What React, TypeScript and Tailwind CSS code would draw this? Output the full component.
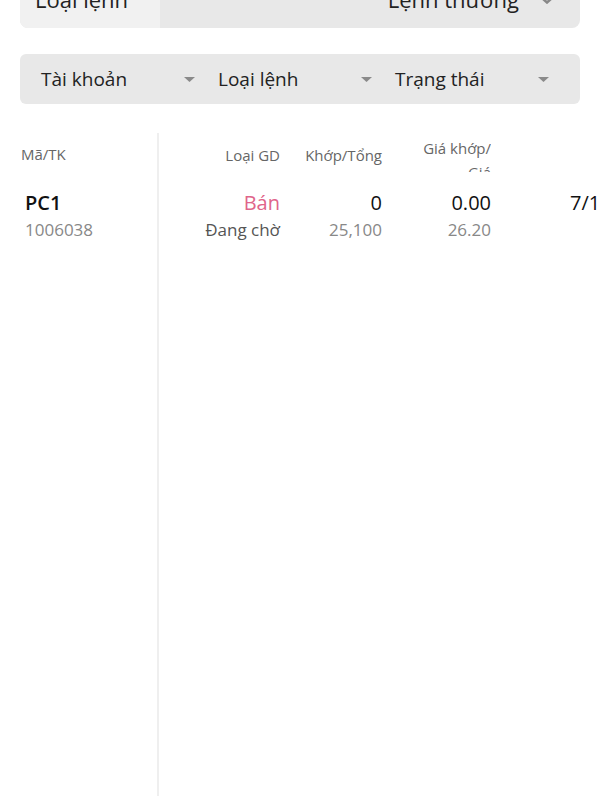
const font = { fontFamily: "'Open Sans', 'Noto Sans', sans-serif" };

function Caret() {
  return (
    <svg width="11" height="5" viewBox="0 0 11 5" className="shrink-0">
      <path d="M0 0 L11 0 L5.5 5 Z" fill="#8a8a8a" />
    </svg>
  );
}

function FilterItem({ label }: { label: string }) {
  return (
    <div className="flex w-[177px] items-center justify-between pr-[23px]">
      <span className="text-[19px] text-[#222]">{label}</span>
      <Caret />
    </div>
  );
}

export default function App() {
  return (
    <div className="relative h-[800px] w-[600px] overflow-hidden bg-white" style={font}>
      {/* order type selector, scrolled half off screen */}
      <div className="mx-5 -mt-[30px] flex h-[58px] overflow-hidden rounded-b-lg bg-[#e8e8e8]">
        <div className="flex w-[140px] items-center bg-[#f1f1f1] pl-[15px] text-[22px] text-[#222]">
          Loại lệnh
        </div>
        <div className="flex flex-1 items-center justify-end gap-[22px] pr-[27px] text-[22px] text-[#222]">
          <span>Lệnh thường</span>
          <svg width="12" height="7" viewBox="0 0 12 7" className="mt-[2px]">
            <path d="M1.5 1.5 L6 5.5 L10.5 1.5" fill="none" stroke="#888" strokeWidth="2.5" strokeLinecap="round" />
          </svg>
        </div>
      </div>

      {/* filters */}
      <div className="mx-5 mt-[26px] flex h-[50px] items-center rounded-md bg-[#e8e8e8] pl-[21px]">
        <FilterItem label="Tài khoản" />
        <FilterItem label="Loại lệnh" />
        <FilterItem label="Trạng thái" />
      </div>

      {/* table */}
      <div className="mt-[29px] flex h-[663px]">
        <div className="w-[159px] shrink-0 border-r-2 border-[#efefef]">
          <div className="flex h-[39px] items-center pl-[21px] pt-[4px] text-[15px] text-[#666]">Mã/TK</div>
          <div className="flex flex-col pl-[25px] pt-[18px]">
            <span className="text-[20px] font-semibold leading-[26px] text-[#111]">PC1</span>
            <span className="text-[17px] leading-[28px] text-[#888]">1006038</span>
          </div>
        </div>

        <div className="flex-1 overflow-hidden">
          <div className="flex h-[39px] items-start text-[15px] leading-[24px] text-[#666]">
            <div className="w-[121px] shrink-0 pt-[10px] text-right">Loại GD</div>
            <div className="w-[102px] shrink-0 pt-[10px] text-right">Khớp/Tổng</div>
            <div className="h-[39px] w-[109px] shrink-0 overflow-hidden pl-[30px] pt-[3px] text-right">
              Giá khớp/ Giá
            </div>
          </div>
          <div className="flex pt-[18px]">
            <div className="flex w-[121px] shrink-0 flex-col items-end">
              <span className="text-[20px] leading-[26px] text-[#e0648a]">Bán</span>
              <span className="text-[17px] leading-[28px] text-[#555]">Đang chờ</span>
            </div>
            <div className="flex w-[102px] shrink-0 flex-col items-end">
              <span className="text-[20px] leading-[26px] text-[#111]">0</span>
              <span className="text-[17px] leading-[28px] text-[#888]">25,100</span>
            </div>
            <div className="flex w-[109px] shrink-0 flex-col items-end">
              <span className="text-[20px] leading-[26px] text-[#111]">0.00</span>
              <span className="text-[17px] leading-[28px] text-[#888]">26.20</span>
            </div>
            <div className="shrink-0 whitespace-nowrap pl-[79px]">
              <span className="text-[20px] leading-[26px] text-[#111]">7/1/2024</span>
            </div>
          </div>
        </div>
      </div>
    </div>
  );
}
